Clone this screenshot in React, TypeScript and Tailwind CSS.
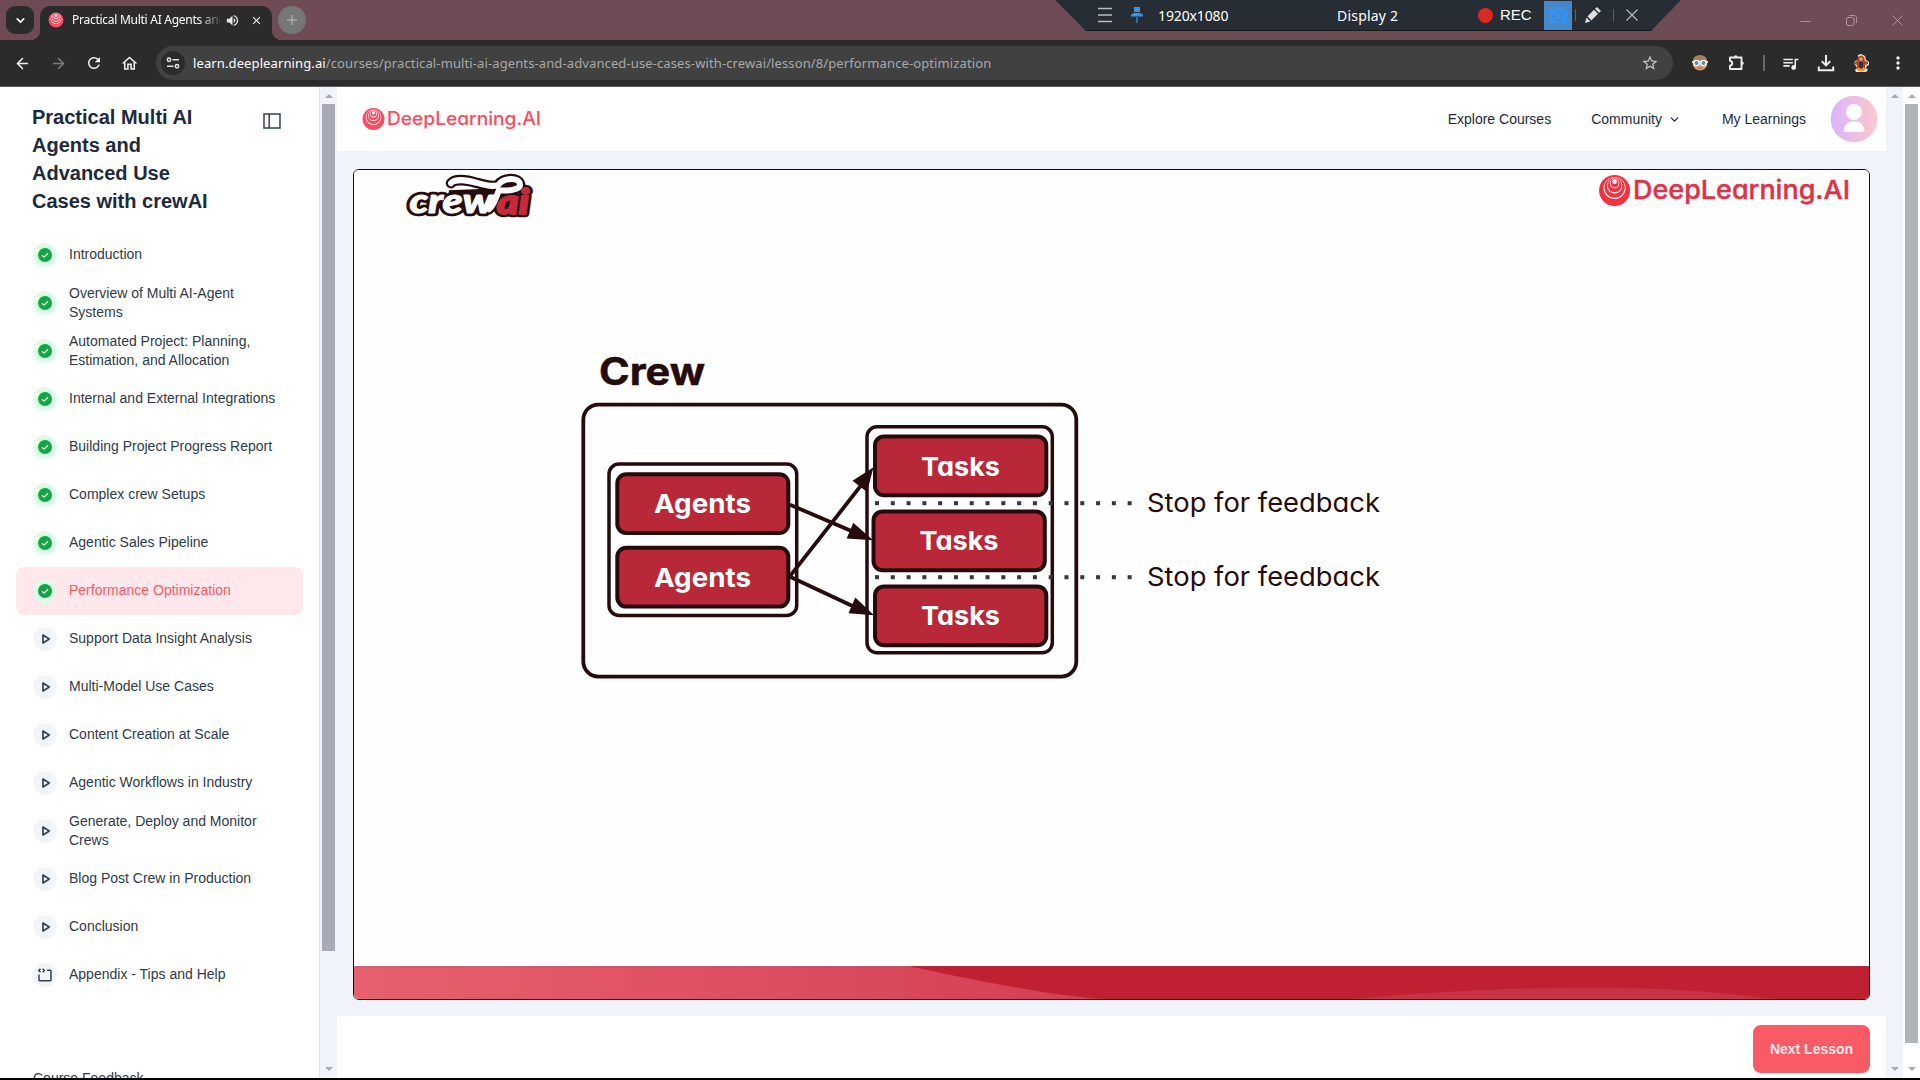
import type { ReactNode } from "react";
import { ArrowLeft, ArrowRight, ChevronDown } from "lucide-react";
import {
  MdOutlineHome,
  MdRefresh,
  MdOutlineQueueMusic,
  MdMoreVert,
  MdStarOutline,
  MdVolumeUp,
  MdClose,
} from "react-icons/md";

const UI = "font-['Noto_Sans','Open_Sans',sans-serif]";
const POPPINS = { fontFamily: "Inter, 'Open Sans', sans-serif", fontFeatureSettings: '"cv11"' };

type Kind = "done" | "video" | "code";
const lessons: { title: string; kind: Kind; active?: boolean }[] = [
  { title: "Introduction", kind: "done" },
  { title: "Overview of Multi AI-Agent Systems", kind: "done" },
  { title: "Automated Project: Planning, Estimation, and Allocation", kind: "done" },
  { title: "Internal and External Integrations", kind: "done" },
  { title: "Building Project Progress Report", kind: "done" },
  { title: "Complex crew Setups", kind: "done" },
  { title: "Agentic Sales Pipeline", kind: "done" },
  { title: "Performance Optimization", kind: "done", active: true },
  { title: "Support Data Insight Analysis", kind: "video" },
  { title: "Multi-Model Use Cases", kind: "video" },
  { title: "Content Creation at Scale", kind: "video" },
  { title: "Agentic Workflows in Industry", kind: "video" },
  { title: "Generate, Deploy and Monitor Crews", kind: "video" },
  { title: "Blog Post Crew in Production", kind: "video" },
  { title: "Conclusion", kind: "video" },
  { title: "Appendix - Tips and Help", kind: "code" },
];

/* Round mark: crescents that thicken toward the bottom */
function Rings({ cx, cy, r, color }: { cx: number; cy: number; r: number; color: string }) {
  const k = r / 16;
  const rings = [
    { dy: -2.6, r: 11.4 },
    { dy: -5, r: 8 },
    { dy: -7.2, r: 4.9 },
  ];
  return (
    <g>
      <circle cx={cx} cy={cy} r={r} fill={color} />
      {rings.map((c) => (
        <g key={c.dy}>
          <circle cx={cx} cy={cy + c.dy * k} r={c.r * k} fill="#fff" />
          <circle cx={cx} cy={cy + (c.dy - 0.4) * k} r={(c.r - 0.85) * k} fill={color} />
        </g>
      ))}
      <circle cx={cx} cy={cy - 9 * k} r={2.4 * k} fill="#fff" />
    </g>
  );
}

function DisplayBar() {
  return (
    <div
      className={`absolute left-[1055px] top-0 flex h-[31px] w-[626px] items-center border-b border-[#171b20] bg-[#262d34] text-white [clip-path:polygon(0_0,100%_0,596px_100%,31px_100%)] ${UI}`}
    >
      <svg width="16" height="16" viewBox="0 0 16 16" className="ml-[42px]" stroke="#bcbcbc" strokeWidth="1.4">
        <path d="M1 1.5h14M1 8h14M1 14.5h14" />
      </svg>
      <svg width="12" height="18" viewBox="0 0 12 18" className="ml-[18px]" fill="#3a94ea">
        <path d="M3 1h6v5H3zM2.500 7h7l2.500 2v1.500H0V9zM5.400 11h1.200v6H5.400z" />
      </svg>
      <span className="ml-[15px] w-[179px] whitespace-nowrap text-[14px] tracking-[-0.12px]">1920x1080</span>
      <span className="w-[141px] whitespace-nowrap text-[14px] tracking-[0.2px]">Display 2</span>
      <span className="size-[15px] rounded-full bg-[#dc2727]" />
      <span className="ml-[7px] w-[44px] font-['Liberation_Sans'] text-[15px]">REC</span>
      <span className="flex h-[29px] w-7 items-center justify-center bg-[#4787c7]">
        <svg width="20" height="18" viewBox="0 0 20 18" fill="#3293f3">
          <path d="M2 3.500h3.500L7 1h6l1.500 2.500H18q1 0 1 1V16q0 1-1 1H2q-1 0-1-1V4.500q0-1 1-1z" />
          <circle cx="10" cy="10" r="4.500" fill="none" stroke="#4787c7" strokeWidth="2" />
          <circle cx="16.500" cy="6" r="1" fill="#4787c7" />
        </svg>
      </span>
      <span className="ml-[3px] h-3 w-px bg-[#59616a]" />
      <svg width="18" height="18" viewBox="0 0 18 18" className="ml-[8px]" fill="#dedede">
        <path d="M1 17l1.500-5.500 3.800 4zM3.500 10.300l6.500-6.500 4 4-6.600 6.600zM11 2.800l2-1.800 4 3.900-2 1.900z" />
      </svg>
      <span className="ml-[11px] h-3 w-px bg-[#59616a]" />
      <svg width="12" height="12" viewBox="0 0 12 12" className="ml-[12px]" stroke="#b7b9bb" strokeWidth="1.200">
        <path d="M.5.5l11 11M11.500.5l-11 11" />
      </svg>
    </div>
  );
}

function Tabs() {
  return (
    <div className={`relative flex h-10 items-end bg-[#6f4c55] ${UI}`}>
      <div className="mb-1.5 ml-1.5 flex size-7 items-center justify-center rounded-[9px] bg-[#2b2b2b]">
        <ChevronDown size={13} strokeWidth={3} color="#fff" />
      </div>
      <div className="ml-[-4px] size-2.5 bg-[radial-gradient(circle_at_0_0,transparent_10px,#2b2b2b_10.5px)]" />
      <div className="flex h-[34px] w-[232px] items-center rounded-t-[10px] bg-[#2b2b2b]">
        <svg width="16" height="16" viewBox="0 0 16 16" className="mb-1.5 ml-2 shrink-0">
          <Rings cx={8} cy={8} r={7.5} color="#fd4a61" />
        </svg>
        <span className="mb-1.5 ml-2 w-[148px] overflow-hidden whitespace-nowrap text-[12px] tracking-[-0.27px] text-white [mask-image:linear-gradient(90deg,#000_125px,transparent_152px)]">
          Practical Multi AI Agents and
        </span>
        <MdVolumeUp size={15} color="#e6e6e6" className="mb-1.5 ml-[5px] shrink-0" />
        <MdClose size={13} color="#f1f1f1" className="mb-1.5 ml-[10px] shrink-0" />
      </div>
      <div className="size-2.5 bg-[radial-gradient(circle_at_100%_0,transparent_10px,#2b2b2b_10.5px)]" />
      <div className="mb-1.5 ml-[-4px] flex size-7 items-center justify-center rounded-full bg-[#767676]">
        <svg width="12" height="12" viewBox="0 0 12 12" stroke="#a9a9a9" strokeWidth="1.500">
          <path d="M6 1v10M1 6h10" />
        </svg>
      </div>
      <div className="mb-[14px] ml-auto mr-[17px] flex items-center gap-[35px]">
        <svg width="11" height="11" viewBox="0 0 11 11" stroke="#ab959b" strokeWidth="1">
          <path d="M.5 6.500h10" />
        </svg>
        <svg width="11" height="11" viewBox="0 0 11 11" fill="none" stroke="#ab959b" strokeWidth="1">
          <rect x=".5" y="2.500" width="7.500" height="8" rx="1.500" />
          <path d="M3 .5h5.500q2 0 2 2v5.500" />
        </svg>
        <svg width="11" height="11" viewBox="0 0 11 11" stroke="#ab959b" strokeWidth="1">
          <path d="M.5.5l10 10M10.500.5l-10 10" />
        </svg>
      </div>
      <DisplayBar />
    </div>
  );
}

function Toolbar() {
  return (
    <div className={`flex h-[47px] items-center border-b border-[#5f5f5f] bg-[#2b2b2b] ${UI}`}>
      <ArrowLeft size={17} strokeWidth={2.3} color="#ededed" className="ml-[14px]" />
      <ArrowRight size={17} strokeWidth={2.3} color="#7d7d7d" className="ml-[19px]" />
      <MdRefresh size={18} color="#ededed" className="ml-[18px]" />
      <MdOutlineHome size={19} color="#ededed" className="ml-[17px]" />
      <div className="ml-[17px] flex h-[34px] w-[1517px] items-center rounded-full bg-[#414141]">
        <span className="ml-[5px] flex size-6 items-center justify-center rounded-full bg-[#2b2b2b]">
          <svg width="14" height="12" viewBox="0 0 14 12" fill="none" stroke="#e3e3e3" strokeWidth="1.500">
            <circle cx="3" cy="2.800" r="1.700" />
            <path d="M6.500 2.800h6.500M1 9.200h6.500" />
            <circle cx="11" cy="9.200" r="1.700" />
          </svg>
        </span>
        <span className="ml-2 mt-px whitespace-nowrap text-[13px] tracking-[0.112px] text-[#a9a9a9]">
          <span className="text-white">learn.deeplearning.ai</span>
          /courses/practical-multi-ai-agents-and-advanced-use-cases-with-crewai/lesson/8/performance-optimization
        </span>
        <MdStarOutline size={18} color="#c9c9c9" className="ml-auto mr-[14px]" />
      </div>
      <svg width="16" height="16" viewBox="0 0 16 16" className="ml-[19px]">
        <circle cx="8" cy="8" r="7.500" fill="#d49c78" />
        <path d="M.8 6C1.500 1 5 .3 8 .3S14.500 1 15.200 6z" fill="#a58159" />
        <path d="M0 6h16v1.500H0z" fill="#eef4f6" />
        <circle cx="4.500" cy="8" r="2.600" fill="#4f91a6" stroke="#f2f6f8" strokeWidth="1.400" />
        <circle cx="11.500" cy="8" r="2.600" fill="#4f91a6" stroke="#f2f6f8" strokeWidth="1.400" />
        <path d="M5.500 13h5" stroke="#c85f4c" />
      </svg>
      <svg width="18" height="18" viewBox="0 0 18 18" className="ml-[20px]" fill="none" stroke="#ededed" strokeWidth="1.900">
        <path d="M2 3.500h11.500v11.500H2v-3.200q2.200-.4 2.200-2.500T2 6.800z" strokeLinejoin="round" />
        <path d="M6 3.200q0-2 1.800-2t1.800 2zM13.800 7.500q2 0 2 1.800t-2 1.800z" fill="#ededed" stroke="none" />
      </svg>
      <span className="ml-[17px] h-4 w-0.5 bg-[#6a6a6a]" />
      <MdOutlineQueueMusic size={19} color="#ededed" className="ml-[16px]" />
      <svg width="18" height="18" viewBox="0 0 18 18" className="ml-[17px]" fill="none" stroke="#ededed" strokeWidth="2">
        <path d="M9 1v10M4.800 7.200L9 11.400l4.200-4.200M1.800 12.500v3.700h14.400v-3.700" />
      </svg>
      <svg width="18" height="18" viewBox="0 0 18 18" className="ml-[17px]">
        <path d="M6 1l3-1 4 2 1 4 3 2v3l-2 1-1 2 2 2-2 2-5 1-5-1-1-2 2-2-1-2-2-2 1-3 3-1z" fill="#f2e4da" />
        <path d="M6 3q3-3 6 0l1 4 3 1v2l-3 1v4H5v-4l-3-1 1-2 2-1z" fill="#b4432a" />
        <circle cx="9" cy="5" r="1.800" fill="#e2a27b" />
        <path d="M7 8h4v6H7z" fill="#34303c" />
        <path d="M4 15l3-2 2 3 2-3 3 2-3 2H7z" fill="#f08a22" />
      </svg>
      <MdMoreVert size={20} color="#ededed" className="ml-[18px]" />
    </div>
  );
}

function Scrollbar({ tone, thumb, thumbBg }: { tone: string; thumb?: string; thumbBg?: string }) {
  return (
    <div className={`flex w-[17px] shrink-0 flex-col items-center justify-between ${tone}`}>
      <div className="flex w-full flex-col items-center">
        <svg width="8" height="4" viewBox="0 0 8 4" className="mb-[6px] mt-[7px]" fill="#a7abb3">
          <path d="M0 4L4 0l4 4z" />
        </svg>
        {thumb && <div className={`w-[13px] ${thumb} ${thumbBg}`} />}
      </div>
      <svg width="8" height="4" viewBox="0 0 8 4" className="mb-[7px]" fill="#a7abb3">
        <path d="M0 0l4 4 4-4z" />
      </svg>
    </div>
  );
}

function LessonIcon({ kind }: { kind: Kind }) {
  if (kind === "done")
    return (
      <span className="flex size-6 shrink-0 items-center justify-center rounded-full bg-[#dcfce7]">
        <svg width="14" height="14" viewBox="0 0 14 14">
          <circle cx="7" cy="7" r="7" fill="#16a34a" />
          <path d="M4 7.300l2 1.900 4-4" fill="none" stroke="#dcfce7" strokeWidth="1.300" />
        </svg>
      </span>
    );
  return (
    <span className="flex size-6 shrink-0 items-center justify-center rounded-full bg-[#f1f5f9]">
      {kind === "video" ? (
        <svg width="14" height="14" viewBox="0 0 14 14" className="ml-px" fill="none" stroke="#334155" strokeWidth="1.700">
          <path d="M4 3v8l6.300-4z" strokeLinejoin="round" />
        </svg>
      ) : (
        <svg width="14" height="14" viewBox="0 0 14 14" fill="none" stroke="#334155" strokeWidth="1.500">
          <path d="M1 6.500V12q0 .8.800.8h10.400q.8 0 .8-.8V3q0-.8-.8-.8H9M2.500.8L.9 2.500l1.600 1.700M4.700.8l1.600 1.700-1.600 1.700" />
        </svg>
      )}
    </span>
  );
}

function Sidebar() {
  return (
    <aside className="flex h-full w-80 shrink-0 flex-col overflow-hidden border-r border-[#dfe3e9] bg-white text-[#1e293b]">
      <div className="flex h-[144px] shrink-0 justify-between pl-8 pr-[38px] pt-4">
        <h1 className="w-[190px] text-[20px] font-bold leading-7">Practical Multi AI Agents and Advanced Use Cases with crewAI</h1>
        <svg width="18" height="16" viewBox="0 0 18 16" className="mt-[10px]" fill="none" stroke="#334155" strokeWidth="1.500">
          <path d="M1 1h16v14H1zM6.200 1v14" />
        </svg>
      </div>
      <ul className="flex shrink-0 flex-col px-4">
        {lessons.map((l) => (
          <li
            key={l.title}
            className={`flex h-12 w-[287px] items-center gap-3 rounded-lg pl-[17px] pr-6 text-[14px] leading-[19px] ${
              l.active ? "bg-[#ffe8eb] text-[#f95b66]" : "text-[#2f3a4a]"
            }`}
          >
            <LessonIcon kind={l.kind} />
            <span className="-mt-px">{l.title}</span>
          </li>
        ))}
      </ul>
      <div className="mt-[69px] shrink-0 pl-[33px] text-[14px] leading-5 text-[#2f3a4a]">Course Feedback</div>
    </aside>
  );
}

function Header() {
  return (
    <header className="flex h-16 shrink-0 items-center bg-white pl-[25px] pr-2 text-[14px] text-[#1e293b]">
      <svg width="180" height="32" viewBox="362 103 180 32">
        <Rings cx={373.5} cy={119} r={11} color="#fd4a61" />
        <text x="387" y="124.800" textLength="154" lengthAdjust="spacingAndGlyphs" fontSize="18" fontWeight="500" fill="#fd4a61" style={POPPINS}>
          DeepLearning.AI
        </text>
      </svg>
      <nav className="ml-auto flex items-center">
        <a>Explore Courses</a>
        <a className="ml-[40px] flex items-center gap-[6px]">
          Community <ChevronDown size={13} strokeWidth={2.5} />
        </a>
        <a className="ml-[41px]">My Learnings</a>
        <svg width="48" height="48" viewBox="0 0 48 48" className="ml-6">
          <defs>
            <linearGradient id="avatar">
              <stop offset="0" stopColor="#d9b4fe" />
              <stop offset="1" stopColor="#fec8cc" />
            </linearGradient>
          </defs>
          <circle cx="24" cy="24" r="23.300" fill="url(#avatar)" />
          <circle cx="24" cy="17" r="8" fill="#fff" />
          <path d="M13.700 36.700q0-10.500 10.300-10.500t10.300 10.500z" fill="#fff" />
        </svg>
      </nav>
    </header>
  );
}

const INK = "#260b0c";

function Box({ x, y, w, h, label, lx, lw, ly }: { x: number; y: number; w: number; h: number; label: string; lx: number; lw: number; ly: number }) {
  return (
    <g>
      <rect x={x} y={y} width={w} height={h} rx="9" fill="#b82838" stroke={INK} strokeWidth="4" />
      <text x={lx} y={ly} textLength={lw} lengthAdjust="spacingAndGlyphs" fontSize="26" fontWeight="700" fill="#fff" style={POPPINS}>
        {label}
      </text>
    </g>
  );
}

function CrewLogo() {
  const swoosh = "M451 183C455 178 468 180 478 183 486 185 492 187 498 185 504 177 519 177 520 184 521 190 506 191 499 190 496 196 495 204 489 209";
  return (
    <g strokeLinejoin="round" strokeLinecap="round">
      <path d="M449 190L500 188 494 208H432L436 198 448 198z" fill={INK} />
      <g fontSize="34" fontWeight="900" fontStyle="italic" style={{ fontFamily: "Lato, sans-serif" }}>
        <g stroke={INK} strokeWidth="6.500" fill={INK}>
          <text x="409.500" y="212.500" textLength="84" lengthAdjust="spacingAndGlyphs">crew</text>
          <text x="497" y="213.500" textLength="32" lengthAdjust="spacingAndGlyphs">ai</text>
        </g>
        <path d={swoosh} fill="none" stroke={INK} strokeWidth="10.500" />
        <text x="409.500" y="212.500" textLength="84" lengthAdjust="spacingAndGlyphs" fill="#fff" stroke="#fff" strokeWidth="1">crew</text>
        <path d={swoosh} fill="none" stroke="#fff" strokeWidth="6" />
        <ellipse cx="511" cy="184.500" rx="5.500" ry="1.800" transform="rotate(-8 511 184.500)" fill={INK} />
        <text x="497" y="213.500" textLength="32" lengthAdjust="spacingAndGlyphs" fill="#c42a3c" stroke="#c42a3c" strokeWidth="2">ai</text>
      </g>
    </g>
  );
}

function Slide() {
  const dots = Array.from({ length: 17 }, (_, i) => 875 + i * 15.79);
  return (
    <svg className="block size-full" viewBox="354 169.800 1515 829">
      <defs>
        <linearGradient id="band" gradientUnits="userSpaceOnUse" x1="354" y1="0" x2="1120" y2="0">
          <stop offset="0" stopColor="#e5616d" />
          <stop offset=".55" stopColor="#de4d62" />
          <stop offset="1" stopColor="#d23d51" />
        </linearGradient>
      </defs>
      <rect x="350" y="165" width="1524" height="840" fill="#fefefe" />
      <CrewLogo />
      <Rings cx={1614.6} cy={190.3} r={15.5} color="#f5303f" />
      <text x="1633" y="199.300" textLength="217" lengthAdjust="spacingAndGlyphs" fontSize="26" fontWeight="500" fill="#dd3247" stroke="#dd3247" strokeWidth=".4" style={POPPINS}>
        DeepLearning.AI
      </text>

      <text x="599" y="384.500" textLength="106" lengthAdjust="spacingAndGlyphs" fontSize="38" fontWeight="700" fill={INK} stroke={INK} strokeWidth=".5" style={POPPINS}>
        Crew
      </text>
      <g fill="none" stroke={INK} strokeWidth="3.800">
        <rect x="583.300" y="404.400" width="493" height="272" rx="15" />
        <rect x="609" y="463.900" width="187.700" height="151.400" rx="10" strokeWidth="3.500" />
        <rect x="867" y="426.600" width="185.300" height="226" rx="10" strokeWidth="3.500" />
      </g>
      <Box x={617.3} y={474} w={171} h={58.8} label="Agents" lx={654} lw={97} ly={512.4} />
      <Box x={617.3} y={547.6} w={171} h={58.8} label="Agents" lx={654} lw={97} ly={586.5} />
      <Box x={875} y={436.2} w={171.3} h={58.8} label="Tasks" lx={921} lw={79} ly={475.5} />
      <Box x={873.5} y={511.2} w={171.3} h={58.8} label="Tasks" lx={919.5} lw={79} ly={550.1} />
      <Box x={875} y={586.2} w={171.3} h={58.8} label="Tasks" lx={921} lw={79} ly={625.2} />
      <g stroke={INK} strokeWidth="3.800" fill={INK}>
        <path d="M790 504.500L852 531M790 576L862 484M790 576.500L853 606" />
        <path d="M873 540l-19.700-17.500-6.600 15.800zM873.500 467l-21 13.500 14.500 11.200zM874 615l-18.700-17.800-6.800 15.800z" stroke="none" />
      </g>
      <g fill="#3b3536">
        {dots.map((x) => (
          <g key={x}>
            <rect x={x} y="501" width="4" height="4" />
            <rect x={x} y="575" width="4" height="4" />
          </g>
        ))}
      </g>
      <g fontSize="26" fill={INK} style={POPPINS}>
        <text x="1147" y="512" textLength="233" lengthAdjust="spacingAndGlyphs">Stop for feedback</text>
        <text x="1147" y="586" textLength="233" lengthAdjust="spacingAndGlyphs">Stop for feedback</text>
      </g>

      <path d="M350 966h1524V1002H350z" fill="url(#band)" />
      <path d="M909 966H1874V1002H1140C1060 997 1010 987 909 966z" fill="#c02132" />
      <path d="M1338 1000C1450 990 1520 987 1610 987.500 1690 988 1740 995 1785 1000z" fill="#c93145" />
      <path d="M350 966.500h1524" stroke="#7c1824" strokeOpacity=".35" />
    </svg>
  );
}

function Page({ children }: { children: ReactNode }) {
  return (
    <div className="flex h-[1080px] w-[1920px] flex-col overflow-hidden border-b-2 border-black bg-white font-['Liberation_Sans',Arial,sans-serif]">
      {children}
    </div>
  );
}

export default function App() {
  return (
    <Page>
      <Tabs />
      <Toolbar />
      <div className="flex min-h-0 flex-1">
        <Sidebar />
        <Scrollbar tone="bg-[#f0f3f9]" thumb="h-[847px]" thumbBg="bg-[#a8abb5]" />
        <main className="flex min-w-0 flex-1 flex-col bg-[#f0f3f9]">
          <Header />
          <div className="mx-4 mb-4 mt-[18px] min-h-0 flex-1 overflow-hidden rounded-md border border-[#111] bg-white">
            <Slide />
          </div>
          <footer className="flex h-[62px] shrink-0 items-start justify-end bg-white pr-4 pt-[9px]">
            <button className="h-12 w-[117px] rounded-lg bg-[#f95b66] text-[14px] font-bold text-[#ffe8eb]">Next Lesson</button>
          </footer>
        </main>
        <Scrollbar tone="bg-[#f0f3f9]" />
        <Scrollbar tone="bg-white" thumb="h-[939px]" thumbBg="bg-[#b0b3b8]" />
      </div>
    </Page>
  );
}
